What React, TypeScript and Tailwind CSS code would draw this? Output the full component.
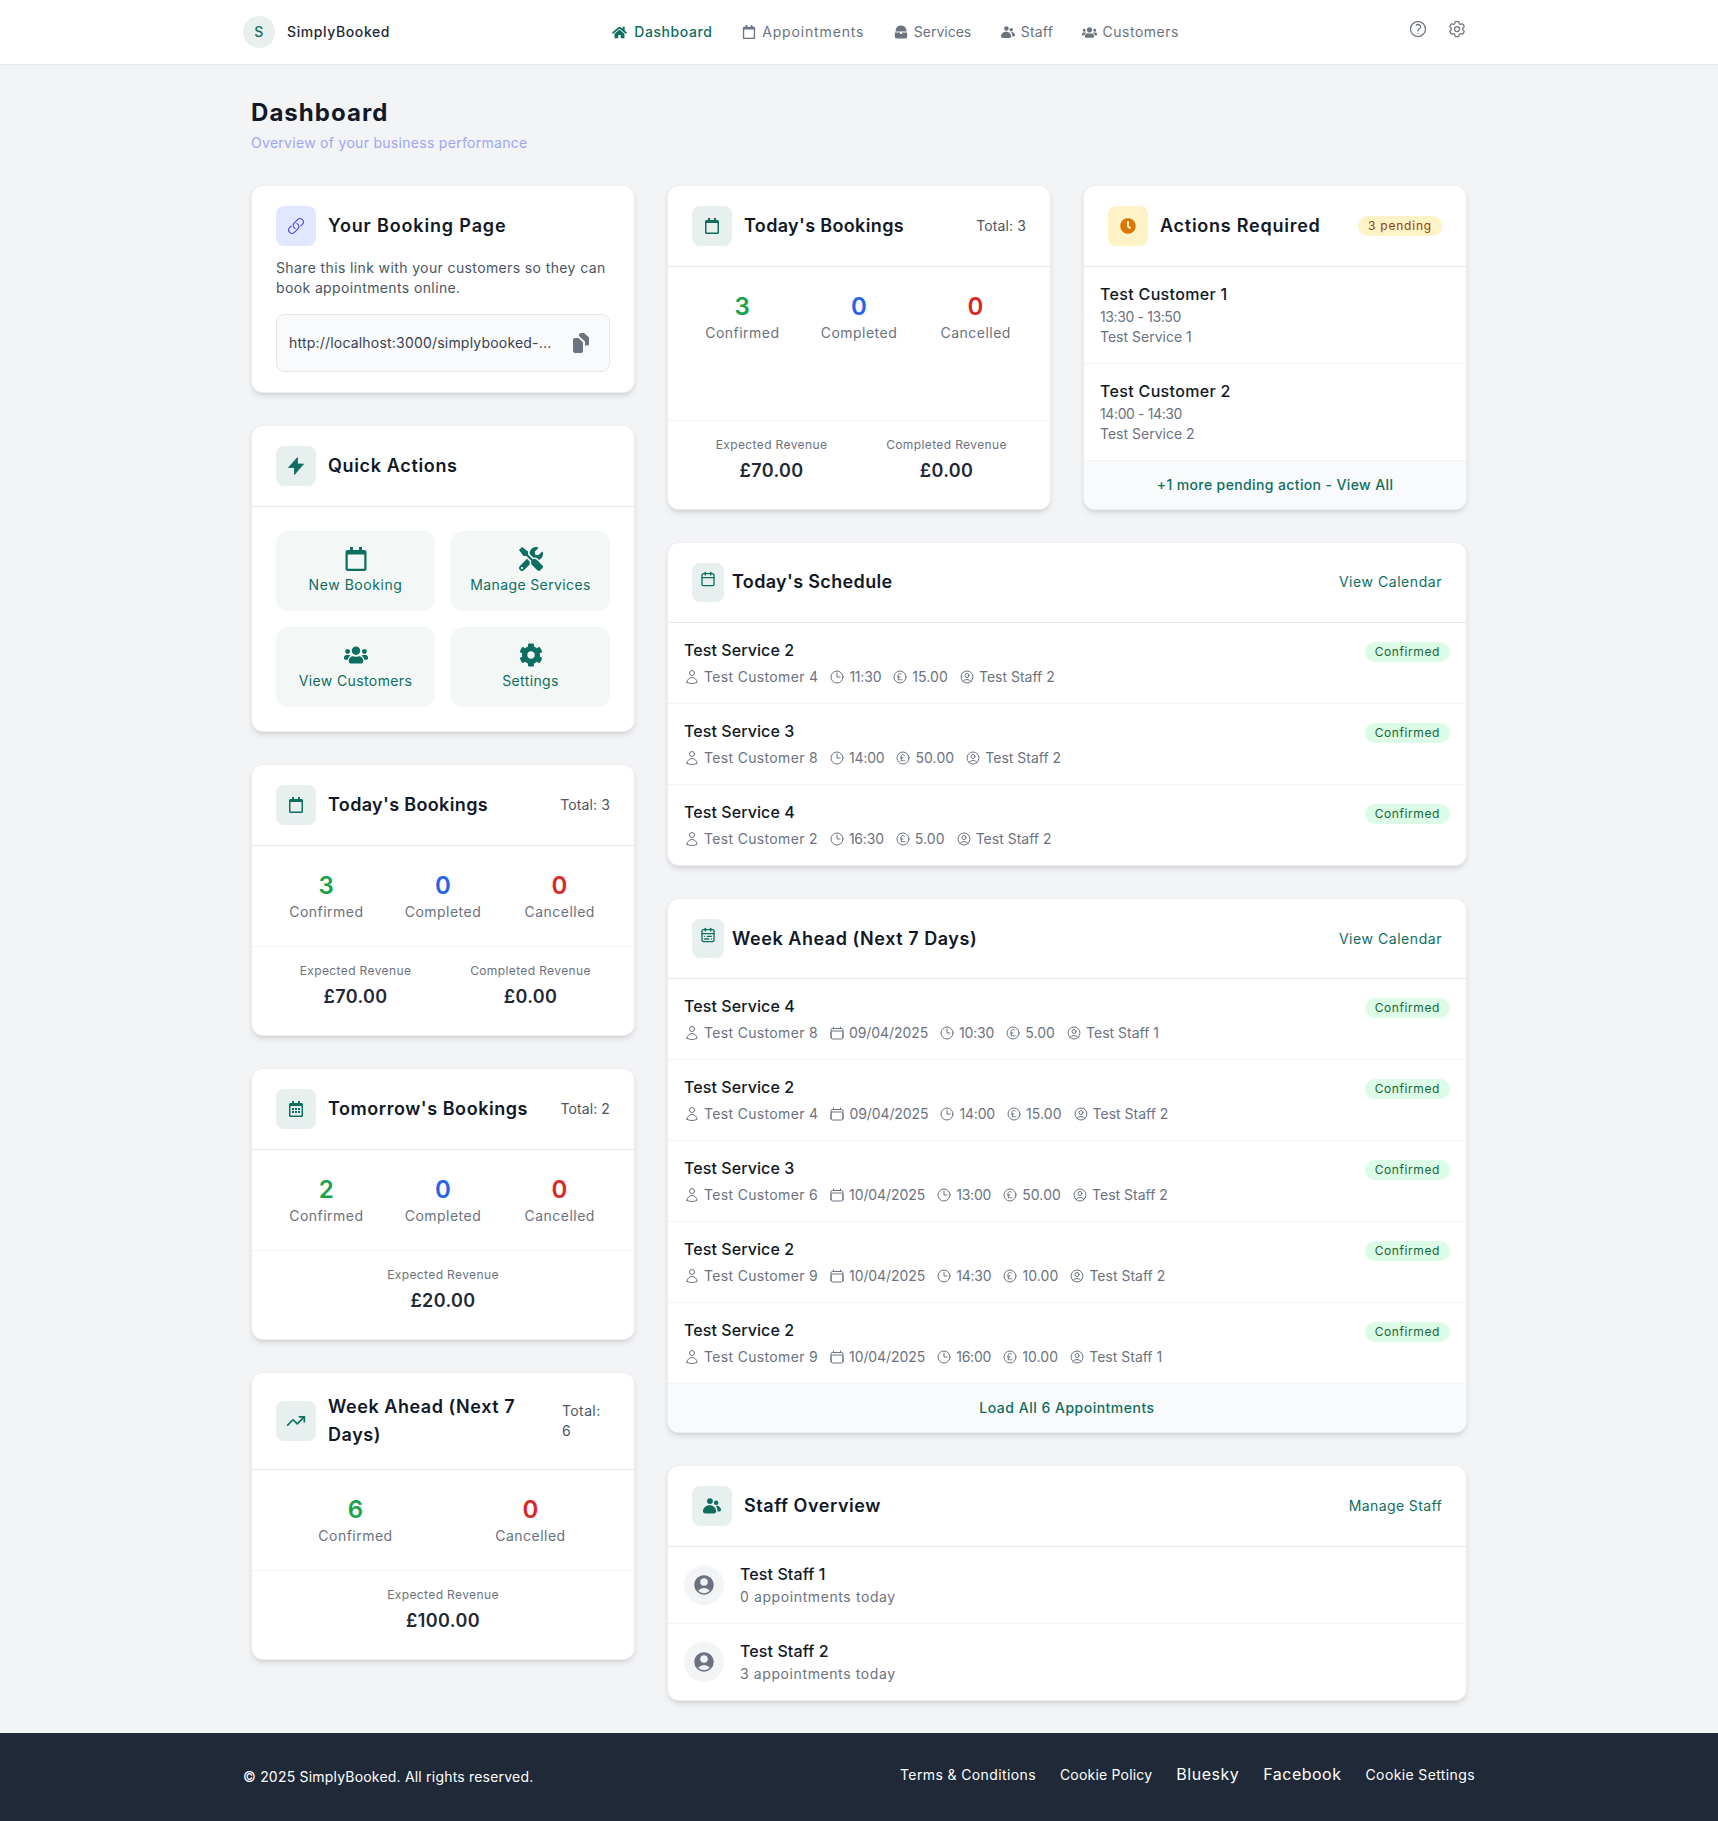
import React from "react";
import { FaHome, FaRegCalendar, FaUsers, FaTools, FaCog, FaClock, FaRegCalendarAlt } from "react-icons/fa";
import { LuCalendar, LuCalendarRange, LuTrendingUp } from "react-icons/lu";
import {
  HiOutlineLink,
  HiOutlineQuestionMarkCircle,
  HiOutlineCog6Tooth,
  HiOutlineUser,
  HiOutlineClock,
  HiOutlineCurrencyPound,
  HiOutlineUserCircle,
  HiOutlineCalendar,
  HiUserCircle,
} from "react-icons/hi2";

function CopyGlyph() {
  return (
    <svg width="17" height="20" viewBox="0 0 17 20" fill="#6b7280">
      <path d="M0 7a2 2 0 0 1 2-2h3.5L10 9.5V18a2 2 0 0 1-2 2H2a2 2 0 0 1-2-2z" />
      <path d="M6 2a2 2 0 0 1 2-2h3l5 4.5V11a1.5 1.5 0 0 1-1.5 1.5H12V8.5L6 3z" />
    </svg>
  );
}

function BoltGlyph() {
  return (
    <svg width="16" height="18" viewBox="0 0 16 18" fill="#0e6e60" stroke="#0e6e60" strokeWidth="0.8" strokeLinejoin="round">
      <path d="M9.5 0.5 L0.5 10.5 H6.5 L6.5 17.5 L15.5 7 H9.5 Z" />
    </svg>
  );
}

function PeopleGlyph({ w }: { w: number }) {
  return (
    <svg width={w} viewBox="0 0 52 46" fill="currentColor">
      <circle cx="20" cy="9" r="8.5" />
      <circle cx="38" cy="14" r="6.5" />
      <path d="M0 38C0 28 9 21 19 21C29 21 38 28 38 38C38 44 33 45 19 45C5 45 0 44 0 38Z" />
      <path d="M41 22C47 24 52 29 52 34C52 38 48 40 42 39C42 32 41 27 37 23Z" />
    </svg>
  );
}

function BagGlyph() {
  return (
    <svg width="14" height="14" viewBox="0 0 14 14" fill="currentColor">
      <path d="M1.5 6.5C1.5 2.5 4.2 0.5 7 0.5S12.5 2.5 12.5 6.5Z" />
      <path d="M0.8 7.5H6V9H8V7.5H13.2V11.5A2 2 0 0 1 11.2 13.5H2.8A2 2 0 0 1 0.8 11.5Z" />
    </svg>
  );
}

function IconBox({ children, cls = "bg-[#e7f0ee] w-10" }: { children: React.ReactNode; cls?: string }) {
  return <div className={`h-10 shrink-0 rounded-lg flex items-center justify-center ${cls}`}>{children}</div>;
}

function Card({ children, cls = "" }: { children: React.ReactNode; cls?: string }) {
  return (
    <div className={`bg-white rounded-xl border border-[#e5e7eb]/70 shadow-md overflow-hidden ${cls}`}>{children}</div>
  );
}

const titleCls = "text-lg font-semibold text-[#111827] tracking-[0.55px]";

function CardHead({
  icon,
  title,
  right,
}: {
  icon: React.ReactNode;
  title: React.ReactNode;
  right?: React.ReactNode;
}) {
  return (
    <div className="flex items-center justify-between px-6 py-5 border-b border-[#e5e7eb]">
      <div className="flex items-center gap-3">
        {icon}
        <h2 className={titleCls}>{title}</h2>
      </div>
      {right}
    </div>
  );
}

function Stat({ n, label, color }: { n: number; label: string; color: string }) {
  return (
    <div className="text-center">
      <div className={`text-2xl font-semibold ${color}`}>{n}</div>
      <div className="text-sm text-[#6b7280] tracking-[0.48px]">{label}</div>
    </div>
  );
}

function Stats({ c, d, x }: { c: number; d?: number; x: number }) {
  return (
    <div className={`grid gap-4 px-6 py-6 ${d === undefined ? "grid-cols-2" : "grid-cols-3"}`}>
      <Stat n={c} label="Confirmed" color="text-[#16a34a]" />
      {d !== undefined && <Stat n={d} label="Completed" color="text-[#2563eb]" />}
      <Stat n={x} label="Cancelled" color="text-[#dc2626]" />
    </div>
  );
}

function Rev({ label, value }: { label: string; value: string }) {
  return (
    <div className="text-center">
      <div className="text-xs text-[#6b7280] mb-1">{label}</div>
      <div className="text-lg font-semibold text-[#1f2937]">{value}</div>
    </div>
  );
}

function Revenue({ items }: { items: [string, string][] }) {
  return (
    <div className={`grid gap-4 px-6 pt-4 pb-6 border-t border-[#f3f4f6] ${items.length === 2 ? "grid-cols-2" : "grid-cols-1"}`}>
      {items.map(([l, v]) => (
        <Rev key={l} label={l} value={v} />
      ))}
    </div>
  );
}

const total = (n: number) => <span className="text-sm text-[#4b5563] tracking-[0.1px]">Total: {n}</span>;
const tealCal = <FaRegCalendar className="text-[#0e6e60]" size={16} />;
const todayTitle = <span className="tracking-[0.35px]">Today's Bookings</span>;

function Meta({ icon, text, cls }: { icon: React.ReactNode; text: string; cls: string }) {
  return (
    <span className={`flex items-center mr-[11px] ${cls}`}>
      <span className="mr-1 text-[#6b7280]">{icon}</span>
      {text}
    </span>
  );
}

type Appt = { s: string; c: string; date?: string; t: string; p: string; st: string };

function Row({ a, last }: { a: Appt; last?: boolean }) {
  return (
    <div className={`flex justify-between px-4 py-4 ${last ? "" : "border-b border-[#f3f4f6]"}`}>
      <div>
        <div className="text-base font-medium leading-[22px] pb-[2px] text-[#111827] tracking-[0.08px]">{a.s}</div>
        <div className="flex mt-1 text-sm text-[#6b7280]">
          <Meta cls="tracking-[0.33px]" icon={<HiOutlineUser size={16} />} text={a.c} />
          {a.date && <Meta cls="tracking-[-0.08px]" icon={<HiOutlineCalendar size={16} />} text={a.date} />}
          <Meta cls="tracking-[-0.2px]" icon={<HiOutlineClock size={16} />} text={a.t} />
          <Meta cls="tracking-[0.1px]" icon={<HiOutlineCurrencyPound size={16} />} text={a.p} />
          <Meta cls="tracking-[0px]" icon={<HiOutlineUserCircle size={16} />} text={a.st} />
        </div>
      </div>
      <span className="mt-[3px] h-5 px-2.5 rounded-full bg-[#dcfce7] text-[#166534] text-xs tracking-[0.6px] flex items-center">
        Confirmed
      </span>
    </div>
  );
}

const today: Appt[] = [
  { s: "Test Service 2", c: "Test Customer 4", t: "11:30", p: "15.00", st: "Test Staff 2" },
  { s: "Test Service 3", c: "Test Customer 8", t: "14:00", p: "50.00", st: "Test Staff 2" },
  { s: "Test Service 4", c: "Test Customer 2", t: "16:30", p: "5.00", st: "Test Staff 2" },
];
const week: Appt[] = [
  { s: "Test Service 4", c: "Test Customer 8", date: "09/04/2025", t: "10:30", p: "5.00", st: "Test Staff 1" },
  { s: "Test Service 2", c: "Test Customer 4", date: "09/04/2025", t: "14:00", p: "15.00", st: "Test Staff 2" },
  { s: "Test Service 3", c: "Test Customer 6", date: "10/04/2025", t: "13:00", p: "50.00", st: "Test Staff 2" },
  { s: "Test Service 2", c: "Test Customer 9", date: "10/04/2025", t: "14:30", p: "10.00", st: "Test Staff 2" },
  { s: "Test Service 2", c: "Test Customer 9", date: "10/04/2025", t: "16:00", p: "10.00", st: "Test Staff 1" },
];

const navItems: [string, React.ReactNode, string][] = [
  ["Appointments", <FaRegCalendar size={14} />, "tracking-[0.85px]"],
  ["Services", <BagGlyph />, "tracking-[0px]"],
  ["Staff", <PeopleGlyph w={14} />, "tracking-[0.2px]"],
  ["Customers", <FaUsers size={15} />, "tracking-[0.5px]"],
];

function Action({ icon, label, cls = "" }: { icon: React.ReactNode; label: string; cls?: string }) {
  return (
    <button className={`h-20 rounded-xl bg-[#f3f7f6] p-4 flex flex-col items-center gap-1 text-sm text-[#0e6e60] ${cls}`}>
      <span className="h-6 flex items-center">{icon}</span>
      <span>{label}</span>
    </button>
  );
}

function Pending({ n, t, s }: { n: string; t: string; s: string }) {
  return (
    <div className="px-4 py-4 border-b border-[#f3f4f6]">
      <div className="text-base font-medium leading-[22px] pb-[2px] text-[#111827] tracking-[0.33px]">{n}</div>
      <div className="text-sm text-[#6b7280] tracking-[-0.38px]">{t}</div>
      <div className="text-sm text-[#6b7280] tracking-[0px]">{s}</div>
    </div>
  );
}

function StaffRow({ n, s, last }: { n: string; s: string; last?: boolean }) {
  return (
    <div className={`flex items-center gap-4 px-4 py-4 ${last ? "" : "border-b border-[#f3f4f6]"}`}>
      <div className="w-10 h-10 rounded-full bg-[#f3f4f6] flex items-center justify-center text-[#6b7280]">
        <HiUserCircle size={24} />
      </div>
      <div>
        <div className="text-base font-medium leading-[22px] pb-[2px] text-[#111827] tracking-[0.1px]">{n}</div>
        <div className="text-sm text-[#6b7280] tracking-[0.6px]">{s}</div>
      </div>
    </div>
  );
}

export default function App() {
  return (
    <div className="min-h-screen bg-[#f3f4f6] font-['Inter',sans-serif] tracking-[0.38px] text-[#111827]">
      <header className="bg-white border-b border-[#e5e7eb]">
        <div className="max-w-7xl mx-auto px-6 h-16 flex items-center justify-between">
          <div className="flex items-center gap-3">
            <div className="w-8 h-8 rounded-full bg-[#e7f0ee] text-[#0e6e60] text-sm font-medium flex items-center justify-center">
              S
            </div>
            <span className="text-sm font-medium text-[#1f2937] tracking-[0.6px]">SimplyBooked</span>
          </div>
          <nav className="flex items-center gap-[28.5px] text-sm text-[#6b7280]">
            <a className="flex items-center gap-[7px] text-[#0e6e60] font-medium tracking-[0.6px]">
              <span className="w-4 h-4 flex items-center justify-center">
                <FaHome size={15} />
              </span>
              Dashboard
            </a>
            {navItems.map(([label, icon, cls]) => (
              <a key={label} className={`flex items-center gap-[5px] ${cls}`}>
                <span className="w-4 h-4 flex items-center justify-center">{icon}</span>
                {label}
              </a>
            ))}
          </nav>
          <div className="flex items-center gap-[3px] -mt-1.5 text-[#6b7280]">
            <button className="p-2">
              <HiOutlineQuestionMarkCircle size={20} />
            </button>
            <button className="p-2">
              <HiOutlineCog6Tooth size={20} />
            </button>
          </div>
        </div>
      </header>

      <main className="max-w-7xl mx-auto px-8 py-8">
        <div className="mb-8">
          <h1 className="text-2xl font-bold text-[#111827] tracking-[1.05px]">Dashboard</h1>
          <p className="mt-1 text-sm text-[#a0a5f5] tracking-[0.29px]">Overview of your business performance</p>
        </div>
        <div className="grid grid-cols-3 gap-8 items-start">
          <div className="flex flex-col gap-8">
            <Card cls="px-6 py-5">
              <div className="flex items-center gap-3 mb-3">
                <IconBox cls="bg-[#e0e7ff] w-10">
                  <HiOutlineLink size={18} className="text-[#4f46e5]" />
                </IconBox>
                <h2 className={titleCls}><span className="tracking-[0.85px]">Your Booking Page</span></h2>
              </div>
              <p className="text-sm text-[#4b5563] mb-4">
                Share this link with your customers so they can book appointments online.
              </p>
              <div className="flex items-center justify-between px-3 py-3 rounded-lg border border-[#e5e7eb] bg-[#f9fafb]">
                <span className="text-sm text-[#374151] whitespace-nowrap tracking-[0.2px]">http://localhost:3000/simplybooked-...</span>
                <button className="p-2 -mr-px h-8 flex items-center justify-center">
                  <CopyGlyph />
                </button>
              </div>
            </Card>

            <Card>
              <CardHead icon={<IconBox><BoltGlyph /></IconBox>} title={<span className="tracking-[0.65px]">Quick Actions</span>} />
              <div className="grid grid-cols-2 gap-4 p-6">
                <Action cls="tracking-[0.55px]" icon={<FaRegCalendar size={24} />} label="New Booking" />
                <Action icon={<FaTools size={24} />} label="Manage Services" />
                <Action icon={<FaUsers size={24} />} label="View Customers" />
                <Action icon={<FaCog size={24} />} label="Settings" />
              </div>
            </Card>

            <Card>
              <CardHead icon={<IconBox>{tealCal}</IconBox>} title={todayTitle} right={total(3)} />
              <Stats c={3} d={0} x={0} />
              <Revenue items={[["Expected Revenue", "£70.00"], ["Completed Revenue", "£0.00"]]} />
            </Card>

            <Card>
              <CardHead
                icon={<IconBox><FaRegCalendarAlt size={16} className="text-[#0e6e60]" /></IconBox>}
                title="Tomorrow's Bookings"
                right={total(2)}
              />
              <Stats c={2} d={0} x={0} />
              <Revenue items={[["Expected Revenue", "£20.00"]]} />
            </Card>

            <Card>
              <CardHead
                icon={<IconBox><LuTrendingUp size={20} className="text-[#0e6e60]" /></IconBox>}
                title={<>Week Ahead (Next 7<br />Days)</>}
                right={<span className="text-sm text-[#4b5563] w-12">Total:<br />6</span>}
              />
              <Stats c={6} x={0} />
              <Revenue items={[["Expected Revenue", "£100.00"]]} />
            </Card>
          </div>

          <div className="col-span-2 flex flex-col gap-8">
            <div className="grid grid-cols-2 gap-8">
              <Card cls="flex flex-col">
                <CardHead icon={<IconBox>{tealCal}</IconBox>} title={todayTitle} right={total(3)} />
                <div className="flex-1">
                  <Stats c={3} d={0} x={0} />
                </div>
                <Revenue items={[["Expected Revenue", "£70.00"], ["Completed Revenue", "£0.00"]]} />
              </Card>
              <Card cls="flex flex-col">
                <CardHead
                  icon={<IconBox cls="bg-[#fef3c7] w-10"><FaClock size={16} className="text-[#d97706]" /></IconBox>}
                  title={<span className="tracking-[0.75px]">Actions Required</span>}
                  right={
                    <span className="h-5 px-2.5 rounded-full bg-[#fef3c7] text-[#92400e] text-xs tracking-[0.8px] flex items-center">
                      3 pending
                    </span>
                  }
                />
                <Pending n="Test Customer 1" t="13:30 - 13:50" s="Test Service 1" />
                <Pending n="Test Customer 2" t="14:00 - 14:30" s="Test Service 2" />
                <div className="h-[47.5px] bg-[#f9fafb] flex items-center justify-center text-sm font-medium text-[#0e6e60]">
                  +1 more pending action - View All
                </div>
              </Card>
            </div>

            <Card>
              <div className="flex justify-between items-center px-6 py-5 border-b border-[#e5e7eb]">
                <div className="flex items-center gap-2">
                  <div className="w-8 h-[39.5px] rounded-lg bg-[#e7f0ee] p-2">
                    <LuCalendar size={16} className="text-[#0e6e60]" />
                  </div>
                  <h2 className={titleCls}><span className="tracking-[0.35px]">Today's Schedule</span></h2>
                </div>
                <a className="text-sm text-[#0e6e60] tracking-[0.55px]">View Calendar</a>
              </div>
              {today.map((a, i) => (
                <Row key={i} a={a} last={i === today.length - 1} />
              ))}
            </Card>

            <Card>
              <div className="flex justify-between items-center px-6 py-5 border-b border-[#e5e7eb]">
                <div className="flex items-center gap-2">
                  <div className="w-8 h-[39px] rounded-lg bg-[#e7f0ee] p-2">
                    <LuCalendarRange size={16} className="text-[#0e6e60]" />
                  </div>
                  <h2 className={titleCls}>Week Ahead (Next 7 Days)</h2>
                </div>
                <a className="text-sm text-[#0e6e60] tracking-[0.55px]">View Calendar</a>
              </div>
              {week.map((a, i) => (
                <Row key={i} a={a} last={i === week.length - 1} />
              ))}
              <div className="h-[49px] bg-[#f9fafb] border-t border-[#f3f4f6] flex items-center justify-center text-sm font-medium tracking-[0.5px] text-[#0e6e60]">
                Load All 6 Appointments
              </div>
            </Card>

            <Card>
              <CardHead
                icon={<IconBox><span className="text-[#0e6e60]"><PeopleGlyph w={18} /></span></IconBox>}
                title="Staff Overview"
                right={<a className="text-sm text-[#0e6e60]">Manage Staff</a>}
              />
              <StaffRow n="Test Staff 1" s="0 appointments today" />
              <StaffRow n="Test Staff 2" s="3 appointments today" last />
            </Card>
          </div>
        </div>
      </main>

      <footer className="bg-[#1f2937] text-white">
        <div className="max-w-7xl mx-auto px-6 h-[88px] flex items-center justify-between">
          <span className="text-sm tracking-[0.2px]">© 2025 SimplyBooked. All rights reserved.</span>
          <div className="flex items-baseline gap-6 mb-[6px]">
            <a className="text-sm">Terms &amp; Conditions</a>
            <a className="text-sm tracking-[0.2px]">Cookie Policy</a>
            <a className="text-base tracking-[0.5px]">Bluesky</a>
            <a className="text-base tracking-[0.5px]">Facebook</a>
            <a className="text-sm">Cookie Settings</a>
          </div>
        </div>
      </footer>
    </div>
  );
}
